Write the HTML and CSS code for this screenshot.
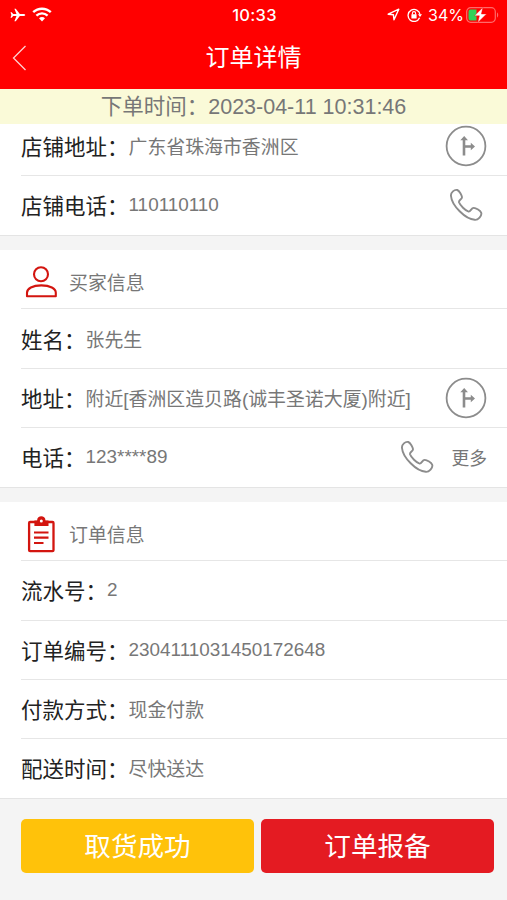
FILE: index.html
```
<!DOCTYPE html>
<html lang="zh-CN">
<head>
  <meta charset="UTF-8">
  <title>订单详情</title>
  <link rel="stylesheet" href="styles.css">
</head>
<body>

<svg class="symbols" width="0" height="0">
  <symbol id="icon-route" viewBox="0 0 42 42">
    <circle cx="21" cy="21" r="19.4" fill="none" stroke="#8c8c8c" stroke-width="1.8"/>
    <path d="M19 30.5V13.5M19 21.5H27" fill="none" stroke="#8c8c8c" stroke-width="2.6"/>
    <path d="M15.3 15.2L19.2 11L23 15.2ZM25.8 17.8L30 21.5L25.8 25.2Z" fill="#8c8c8c"/>
  </symbol>
  <symbol id="icon-phone" viewBox="0 0 34 34">
    <path d="M2 8C1.5 4.5 5.5 1.2 8.3 2C10.5 2.8 12.8 7.2 13 9.2C13.2 11.3 9.5 12 10 14.3C11 17.2 16.5 22.8 19.6 23.6C21.6 24 22.3 19.8 24.7 19.9C27 20 31.5 22.5 32.2 24.7C33.2 27.7 29 32.2 25.7 31.8C16.5 31.3 2.7 17.5 2 8Z" fill="none" stroke="#8c8c8c" stroke-width="1.9" stroke-linejoin="round"/>
  </symbol>
</svg>

<header class="header">
  <div class="status-bar">
    <div class="status-left">
      <svg width="16" height="14" viewBox="0 0 16 14">
        <path d="M15.2 7C15.2 6.3 14.2 6 13.2 6H9.8L5.8 0.7H4.4L6.5 6H3.2L1.7 4.2H0.5L1.4 7L0.5 9.8H1.7L3.2 8H6.5L4.4 13.3H5.8L9.8 8H13.2C14.2 8 15.2 7.7 15.2 7Z" fill="#fff"/>
      </svg>
      <svg width="20" height="15" viewBox="0 0 20 15">
        <path d="M1.2 5.2C6.2 0.5 13.8 0.5 18.8 5.2M4.4 8.6C7.6 5.6 12.4 5.6 15.6 8.6" fill="none" stroke="#fff" stroke-width="2.4"/>
        <path d="M7 11.2C8.7 9.7 11.3 9.7 13 11.2L10 14.4Z" fill="#fff"/>
      </svg>
    </div>
    <div class="clock">10:33</div>
    <div class="status-right">
      <svg width="13" height="13" viewBox="0 0 13 13">
        <path d="M1.2 6.2L11.8 1.2L7 11.8L6.4 6.7Z" fill="none" stroke="#fff" stroke-width="1.4" stroke-linejoin="round"/>
      </svg>
      <svg class="lock" width="15" height="14" viewBox="0 0 15 14">
        <path d="M12.6 9.8A6 6 0 1 1 13 6.5" fill="none" stroke="#fff" stroke-width="1.3"/>
        <path d="M11 6.3H15L13 9Z" fill="#fff"/>
        <rect x="4.4" y="6.2" width="5.2" height="4.2" rx="0.5" fill="#fff"/>
        <path d="M5.4 6.5V5.2A1.6 1.6 0 0 1 8.6 5.2V6.5" fill="none" stroke="#fff" stroke-width="1.1"/>
      </svg>
      <span class="percent">34%</span>
      <svg width="33" height="16" viewBox="0 0 33 16">
        <rect x="0.7" y="0.7" width="28.6" height="14.6" rx="4" fill="none" stroke="#ff6a6a" stroke-width="1.2"/>
        <path d="M31 5.5C32.6 6 32.6 10 31 10.5Z" fill="#ff6a6a"/>
        <path d="M4.5 2.5H10.5V13.5H4.5A2 2 0 0 1 2.5 11.5V4.5A2 2 0 0 1 4.5 2.5Z" fill="#30d158"/>
        <path d="M16.8 0.5L8.5 8.8H13.4L11.8 15.5L20.5 7H15.4Z" fill="#fff" stroke="#f00" stroke-width="0.4"/>
      </svg>
    </div>
  </div>
  <div class="nav">
    <svg class="back" width="15" height="26" viewBox="0 0 15 26">
      <path d="M13.5 1L1.5 13L13.5 25" fill="none" stroke="#ffd0d0" stroke-width="1.3"/>
    </svg>
    <h1>订单详情</h1>
  </div>
</header>

<div class="notice">下单时间：2023-04-11 10:31:46</div>

<section class="card">
  <div class="row first">
    <span class="label">店铺地址：</span><span class="value text">广东省珠海市香洲区</span>
    <svg class="route"><use href="#icon-route"/></svg>
  </div>
  <div class="row">
    <span class="label">店铺电话：</span><span class="value">110110110</span>
    <svg class="phone"><use href="#icon-phone"/></svg>
  </div>
</section>

<section class="card">
  <div class="row title">
    <svg class="title-icon" width="40" height="40" viewBox="0 0 40 40">
      <g fill="none" stroke="#d3150f" stroke-width="2.1" stroke-linejoin="round">
        <circle cx="20" cy="12.2" r="7"/>
        <path d="M6 34.2V30.7C6 26.5 11.5 23.4 20.3 23.4C29.2 23.4 34.8 26.5 34.8 30.7V34.2Z"/>
      </g>
    </svg>
    <span class="value text">买家信息</span>
  </div>
  <div class="row">
    <span class="label">姓名：</span><span class="value text">张先生</span>
  </div>
  <div class="row">
    <span class="label">地址：</span><span class="value text">附近[香洲区造贝路(诚丰圣诺大厦)附近]</span>
    <svg class="route"><use href="#icon-route"/></svg>
  </div>
  <div class="row">
    <span class="label">电话：</span><span class="value">123****89</span>
    <svg class="phone"><use href="#icon-phone"/></svg>
    <span class="more">更多</span>
  </div>
</section>

<section class="card">
  <div class="row title">
    <svg class="title-icon" width="40" height="40" viewBox="0 0 40 40">
      <rect x="8.1" y="8" width="24.4" height="29.2" rx="1" fill="none" stroke="#d3150f" stroke-width="2.3"/>
      <path d="M13.4 12V6.5H16.1C16.1 0.9 24.5 0.9 24.5 6.5H27.5V12Z" fill="#d3150f"/>
      <circle cx="20.3" cy="6.9" r="1.5" fill="#fff"/>
      <path d="M13 18.5H27.5M13 23.7H27.5M13 29H22.5" fill="none" stroke="#d3150f" stroke-width="2.2"/>
    </svg>
    <span class="value text">订单信息</span>
  </div>
  <div class="row">
    <span class="label">流水号：</span><span class="value">2</span>
  </div>
  <div class="row">
    <span class="label">订单编号：</span><span class="value">2304111031450172648</span>
  </div>
  <div class="row">
    <span class="label">付款方式：</span><span class="value text">现金付款</span>
  </div>
  <div class="row">
    <span class="label">配送时间：</span><span class="value text">尽快送达</span>
  </div>
</section>

<footer class="actions">
  <button class="btn btn-pickup">取货成功</button>
  <button class="btn btn-report">订单报备</button>
</footer>

</body>
</html>
```
FILE: styles.css
```
* {
  box-sizing: border-box;
}

body {
  margin: 0;
  height: 900px;
  overflow: hidden;
  background: #f4f4f4;
  font-family: "Liberation Sans", "Noto Sans CJK SC", sans-serif;
  color: #777;
}

svg {
  display: block;
  flex: none;
}

.symbols {
  position: absolute;
}

.header {
  height: 89px;
  background: #f00;
  color: #fff;
}

.status-bar {
  display: grid;
  grid-template-columns: 1fr auto 1fr;
  align-items: center;
  height: 29px;
  padding: 0 8px 0 10px;
}

.status-left,
.status-right {
  display: flex;
  align-items: center;
}

.status-left {
  gap: 6px;
}

.status-right {
  justify-content: flex-end;
}

.clock {
  font: 500 16.5px Inter, sans-serif;
  letter-spacing: 0.3px;
}

.lock {
  margin: 0 6px 0 7px;
}

.percent {
  margin-right: 2px;
  font: 16px Inter, sans-serif;
}

.nav {
  display: grid;
  grid-template-columns: 40px 1fr 40px;
  align-items: center;
  height: 58px;
}

.back {
  margin-left: 12px;
}

.nav h1 {
  margin: 0;
  font-size: 24px;
  font-weight: 400;
  line-height: 56px;
  text-align: center;
}

.notice {
  height: 35px;
  background: #fafad8;
  font-size: 21.5px;
  line-height: 37px;
  text-align: center;
}

.card {
  margin-bottom: 14.5px;
  padding-left: 21px;
  background: #fff;
  border-bottom: 1px solid #e4e4e4;
}

.row {
  display: flex;
  align-items: center;
  height: 59.2px;
  padding-right: 20px;
  border-bottom: 1px solid #e6e6e6;
  white-space: nowrap;
}

.row:last-child {
  height: 58.8px;
  border-bottom: none;
}

.row.first {
  height: 52px;
  padding-bottom: 7px;
}

.title {
  padding-top: 6px;
}

.title-icon {
  margin-right: 8px;
}

.label {
  padding-bottom: 1px;
  color: #222;
  font-size: 21.5px;
}

.value {
  flex: 1;
  font-size: 18.9px;
}

.text {
  padding-bottom: 1px;
}

.more {
  margin-left: 13px;
  padding-bottom: 1px;
  font-size: 17.8px;
}

.route {
  width: 42px;
  height: 42px;
}

.phone {
  width: 34px;
  height: 34px;
  margin-right: 4px;
}

.actions {
  display: flex;
  gap: 7px;
  margin-top: 20px;
  padding: 0 13px 0 21px;
}

.btn {
  flex: 1;
  height: 54px;
  padding: 0 0 3px;
  border: none;
  border-radius: 5px;
  color: #fff;
  font-family: inherit;
  font-size: 26.6px;
}

.btn-pickup {
  background: #ffc20a;
}

.btn-report {
  background: #e41b22;
}
```
